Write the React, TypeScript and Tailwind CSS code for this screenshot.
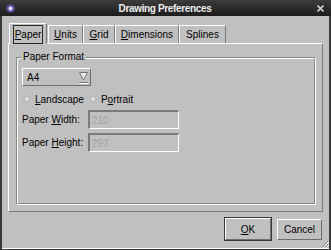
import React from "react";

const font = { fontFamily: '"Liberation Sans", Arial, sans-serif' };

function U({ children }: { children: React.ReactNode }) {
  return <span className="underline underline-offset-[1px] decoration-[1px]">{children}</span>;
}

function Tab({ w, selected, children }: { w: string; selected?: boolean; children: React.ReactNode }) {
  if (selected) {
    return (
      <div className={`${w} h-[21px] flex items-center justify-center border-t border-l border-white border-r border-r-[#7c7c7c] bg-[#c0c0c0] relative z-10 -mb-px`}>
        <div className="h-[19px] w-[30px] mt-[1px] flex items-center justify-center border border-[#2a2a2a]">
          {children}
        </div>
      </div>
    );
  }
  return (
    <div className={`${w} h-[18px] flex items-center justify-center border-t border-l border-white border-r border-r-[#7c7c7c]`}>
      {children}
    </div>
  );
}

function Diamond() {
  return (
    <svg width="8" height="8" viewBox="0 0 8 8" className="shrink-0">
      <polygon points="4,0.5 7.5,4 4,7.5 0.5,4" fill="#dcdcdc" stroke="#a8a8a8" strokeWidth="1" />
    </svg>
  );
}

function Field({ value }: { value: string }) {
  return (
    <div className="w-[91px] h-[19px] border-t-2 border-l-2 border-t-[#7a7a7a] border-l-[#7a7a7a] border-b border-r border-b-white border-r-white flex items-center pl-[2px] text-[#a2a2a2]">
      {value}
    </div>
  );
}

export default function App() {
  return (
    <div className="w-[331px] h-[250px] flex flex-col bg-[#c0c0c0] text-[10px] text-black relative overflow-hidden" style={font}>
      {/* title bar */}
      <div className="h-[16px] shrink-0 bg-gradient-to-b from-[#3c3c3c] to-[#1c1c1c] flex items-center relative">
        <svg width="9" height="9" viewBox="0 0 9 9" className="ml-[6px]">
          <circle cx="4.5" cy="4.5" r="4" fill="#5e4fa8" />
          <circle cx="4.5" cy="4.5" r="2" fill="#e6e0ff" />
        </svg>
        <div className="flex-1 text-center font-bold text-[10px] tracking-[-0.35px] text-[#eeeeee] -ml-[2px]">Drawing Preferences</div>
        <svg width="7" height="7" viewBox="0 0 7 7" className="mr-[7px]">
          <path d="M0.5 0.5 L6.5 6.5 M6.5 0.5 L0.5 6.5" stroke="#cfcfcf" strokeWidth="1.6" />
        </svg>
      </div>

      <div className="flex-1 flex flex-col border-l-2 border-r-2 border-b border-[#3a3a3a]">
        <div className="flex-1 flex flex-col border-b border-white px-[6px] pt-[6px]">
          {/* tabs */}
          <div className="h-[21px] flex items-end pl-[1px]">
            <Tab w="w-[38px]" selected><U>P</U>aper</Tab>
            <div className="w-px" />
            <Tab w="w-[35px]"><U>U</U>nits</Tab>
            <Tab w="w-[32px]"><U>G</U>rid</Tab>
            <Tab w="w-[64px]"><U>D</U>imensions</Tab>
            <Tab w="w-[47px]">Splines</Tab>
          </div>

          {/* panel */}
          <div className="h-[169px] flex flex-col border-t border-l border-white border-r border-b border-r-[#7c7c7c] border-b-[#7c7c7c] pl-[7px] pr-[6px] pt-[13px] pb-[6px]">
            <div className="flex-1 relative border border-t-[#858585] border-l-[#858585] border-r-white border-b-white">
              <div className="absolute -top-[7px] left-[4px] px-[2px] bg-[#c0c0c0] leading-[12px]">Paper Format</div>
              <div className="h-full border border-t-white border-l-white border-r-[#858585] border-b-[#858585] pl-[4px] pt-[9px] flex flex-col">
                {/* combo */}
                <div className="w-[69px] h-[18px] border border-t-white border-l-white border-r-[#6e6e6e] border-b-[#6e6e6e] flex items-center pl-[4px] pr-[2px]">
                  <span className="flex-1">A4</span>
                  <svg width="9" height="13" viewBox="0 0 9 13">
                    <polygon points="0.5,1.5 8.5,1.5 4.5,9" fill="#e8e8e8" stroke="#777" strokeWidth="1" />
                    <line x1="0" y1="11.5" x2="9" y2="11.5" stroke="#777" strokeWidth="1" />
                    <line x1="0" y1="12.5" x2="9" y2="12.5" stroke="#fff" strokeWidth="1" />
                  </svg>
                </div>
                {/* radios */}
                <div className="h-[14px] mt-[6px] flex items-center">
                  <div className="ml-[1px]"><Diamond /></div>
                  <span className="ml-[4px]"><U>L</U>andscape</span>
                  <div className="ml-[5px]"><Diamond /></div>
                  <span className="ml-[4px]">P<U>o</U>rtrait</span>
                </div>
                {/* width */}
                <div className="mt-[4px] flex items-center">
                  <span className="w-[66px]">Paper <U>W</U>idth:</span>
                  <Field value="210" />
                </div>
                <div className="mt-[4px] flex items-center">
                  <span className="w-[66px]">Paper <U>H</U>eight:</span>
                  <Field value="297" />
                </div>
              </div>
            </div>
          </div>

          {/* buttons */}
          <div className="mt-[5px] h-[24px] flex items-center justify-end gap-[5px] pr-[1px]">
            <div className="w-[48px] h-[24px] border border-[#3a3a3a] flex">
              <div className="flex-1 border border-t-white border-l-white border-r-[#6e6e6e] border-b-[#6e6e6e] flex items-center justify-center">
                <span><U>O</U>K</span>
              </div>
            </div>
            <div className="w-[45px] h-[21px] border border-t-white border-l-white border-r-[#6e6e6e] border-b-[#6e6e6e] flex items-center justify-center">
              Cancel
            </div>
          </div>
        </div>
      </div>

      {/* resize grip */}
      <svg width="9" height="9" viewBox="0 0 9 9" className="absolute right-[2px] bottom-[2px]">
        <path d="M8 2 L2 8 M8 5 L5 8 M8 8 L8 8" stroke="#8a8a8a" strokeWidth="1" />
        <path d="M9 3 L3 9 M9 6 L6 9" stroke="#ffffff" strokeWidth="1" />
      </svg>
    </div>
  );
}
